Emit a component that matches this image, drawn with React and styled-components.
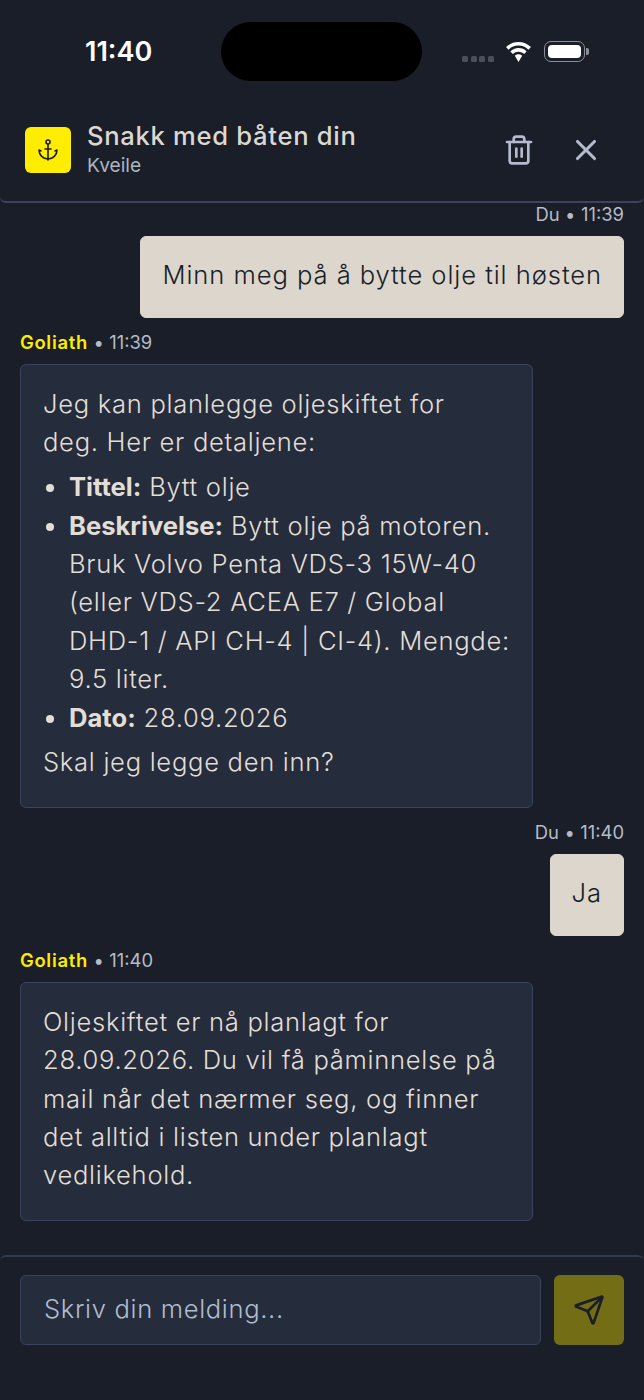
import React from "react"
import styled, { createGlobalStyle } from "styled-components"
import { Anchor, Trash2, X, Send } from "lucide-react"

const GlobalStyle = createGlobalStyle`
  html, body {
    margin: 0;
    padding: 0;
    background: #191e29;
  }
  * {
    box-sizing: border-box;
  }
`

const Screen = styled.div`
  width: 644px;
  height: 1400px;
  display: flex;
  flex-direction: column;
  overflow: hidden;
  background: #191e29;
  color: #dcd8d0;
  font-family: Inter, "Open Sans", sans-serif;
`

const StatusBar = styled.div`
  height: 101px;
  flex-shrink: 0;
  display: flex;
  align-items: flex-start;
  padding: 22px 56px 0 85px;
`

const Clock = styled.div`
  width: 136px;
  height: 59px;
  display: flex;
  align-items: center;
  color: #fff;
  font-size: 27px;
  font-weight: 600;
`

const Island = styled.div`
  width: 201px;
  height: 59px;
  border-radius: 30px;
  background: #000;
`

const StatusIcons = styled.div`
  height: 59px;
  margin-left: 40px;
  display: flex;
  align-items: center;
  flex: 1;
`

const SignalDots = styled.div`
  display: flex;
  gap: 2.5px;
  margin-top: 14px;
  margin-right: 12px;
`

const SignalDot = styled.span`
  width: 6px;
  height: 6px;
  border-radius: 1.5px;
  background: #4b4f59;
`

const Battery = styled.div`
  margin-left: 13px;
  width: 41px;
  height: 21px;
  padding: 3px;
  border: 1.5px solid #8b8e96;
  border-radius: 7px;
  position: relative;
  &::after {
    content: "";
    position: absolute;
    right: -5px;
    top: 5.5px;
    width: 2.5px;
    height: 7px;
    border-radius: 0 2px 2px 0;
    background: #8b8e96;
  }
`

const BatteryFill = styled.div`
  height: 100%;
  border-radius: 4px;
  background: #fff;
`

const Header = styled.header`
  height: 102px;
  flex-shrink: 0;
  display: flex;
  align-items: center;
  padding: 0 41px 3px 25px;
  border-bottom: 2px solid #3c445c;
  border-radius: 0 0 6px 6px;
`

const LogoBox = styled.div`
  width: 46px;
  height: 46px;
  margin-top: 1px;
  display: flex;
  align-items: center;
  justify-content: center;
  border-radius: 6px;
  background: #ffed00;
  color: #191e29;
`

const Titles = styled.div`
  flex: 1;
  margin-left: 16px;
`

const Title = styled.div`
  font-size: 25.6px;
  line-height: 32px;
  font-weight: 500;
  letter-spacing: 0.7px;
  margin-top: -1px;
`

const Subtitle = styled.div`
  font-size: 19.2px;
  line-height: 26px;
  color: #aeb4c0;
`

const IconButton = styled.button`
  display: flex;
  padding: 0;
  margin-left: ${({ $gap }) => $gap}px;
  border: 0;
  background: none;
  color: #b4bbcf;
`

const Messages = styled.main`
  flex: 1;
  display: flex;
  flex-direction: column;
  padding: 0 20px;
`

const Meta = styled.div`
  display: flex;
  justify-content: ${({ $mine }) => ($mine ? "flex-end" : "flex-start")};
  gap: 0.3em;
  height: 22px;
  margin: ${({ $first }) => ($first ? "0" : "13px")} 0 11px;
  font-size: 18.4px;
  line-height: 22px;
  color: #b6bbc6;
`

const Sender = styled.span`
  color: #ffed00;
  font-weight: 600;
  letter-spacing: 0.7px;
`

const Bubble = styled.div`
  align-self: ${({ $mine }) => ($mine ? "flex-end" : "flex-start")};
  max-width: 85%;
  width: ${({ $mine }) => ($mine ? "auto" : "85%")};
  padding: ${({ $mine }) => ($mine ? "19px 21px 22.6px" : "20px 22px 25px")};
  border-radius: 6px;
  border: 1px solid ${({ $mine }) => ($mine ? "#dcd6cc" : "#3c445c")};
  background: ${({ $mine }) => ($mine ? "#dcd6cc" : "#252c3b")};
  color: ${({ $mine }) => ($mine ? "#191e29" : "#e2ded6")};
  font-size: 25.6px;
  font-weight: 350;
  line-height: 38.4px;
  letter-spacing: ${({ $mine }) => ($mine ? "0.93px" : "0.7px")};
  white-space: nowrap;
  strong {
    font-weight: 700;
    letter-spacing: 0;
  }
`

const Paragraph = styled.p`
  margin: 0;
`

const List = styled.ul`
  margin: 6.4px 0;
  padding-left: 26px;
  li::marker {
    font-size: 25px;
  }
`

const Composer = styled.footer`
  height: 145px;
  flex-shrink: 0;
  display: flex;
  align-items: flex-start;
  gap: 13px;
  padding: 18px 20px 0;
  border-top: 2px solid #323a4e;
  border-radius: 6px 6px 0 0;
`

const Input = styled.div`
  flex: 1;
  height: 70px;
  display: flex;
  align-items: center;
  padding: 0 0 4px 23px;
  border: 1px solid #3c445c;
  border-radius: 6px;
  background: #252c3b;
  color: #b0bccd;
  font-size: 25.6px;
  font-weight: 350;
  letter-spacing: 0.65px;
`

const SendButton = styled.button`
  width: 70px;
  height: 70px;
  display: flex;
  align-items: center;
  justify-content: center;
  padding: 0;
  border: 0;
  border-radius: 6px;
  background: #736d15;
  color: #191e29;
`

const App = () => {
  return (
    <Screen>
      <GlobalStyle />
      <StatusBar>
        <Clock>11:40</Clock>
        <Island />
        <StatusIcons>
          <SignalDots>
            <SignalDot />
            <SignalDot />
            <SignalDot />
            <SignalDot />
          </SignalDots>
          <svg width="25" height="20" viewBox="1.8 1 22.4 18" fill="#fff">
            <path d="M13 4.2c3.5 0 6.7 1.4 9 3.7l2.200-2.300A16 16 0 0 0 13 1 16 16 0 0 0 1.800 5.600L4 7.900a12.700 12.700 0 0 1 9-3.700z" />
            <path d="M13 9.700c2 0 3.800.8 5.100 2.100l2.200-2.300A10.300 10.300 0 0 0 13 6.500c-2.800 0-5.400 1.100-7.300 3l2.200 2.300A7.200 7.200 0 0 1 13 9.700z" />
            <path d="M13 12c-1.300 0-2.400.5-3.300 1.300L13 19l3.300-5.700A4.700 4.700 0 0 0 13 12z" />
          </svg>
          <Battery>
            <BatteryFill />
          </Battery>
        </StatusIcons>
      </StatusBar>
      <Header>
        <LogoBox>
          <Anchor size={24} strokeWidth={1.6} />
        </LogoBox>
        <Titles>
          <Title>Snakk med båten din</Title>
          <Subtitle>Kveile</Subtitle>
        </Titles>
        <IconButton>
          <Trash2 size={32} strokeWidth={2} />
        </IconButton>
        <IconButton $gap={34}>
          <X size={34} strokeWidth={2.2} />
        </IconButton>
      </Header>
      <Messages>
        <Meta $mine $first>
          <span>Du</span>
          <span>•</span>
          <span>11:39</span>
        </Meta>
        <Bubble $mine>Minn meg på å bytte olje til høsten</Bubble>
        <Meta>
          <Sender>Goliath</Sender>
          <span>•</span>
          <span>11:39</span>
        </Meta>
        <Bubble>
          <Paragraph>
            Jeg kan planlegge oljeskiftet for
            <br />
            deg. Her er detaljene:
          </Paragraph>
          <List>
            <li>
              <strong>Tittel:</strong> Bytt olje
            </li>
            <li>
              <strong>Beskrivelse:</strong> Bytt olje på motoren.
              <br />
              Bruk Volvo Penta VDS-3 15W-40
              <br />
              (eller VDS-2 ACEA E7 / Global
              <br />
              DHD-1 / API CH-4 | CI-4). Mengde:
              <br />
              9.5 liter.
            </li>
            <li>
              <strong>Dato:</strong> 28.09.2026
            </li>
          </List>
          <Paragraph>Skal jeg legge den inn?</Paragraph>
        </Bubble>
        <Meta $mine>
          <span>Du</span>
          <span>•</span>
          <span>11:40</span>
        </Meta>
        <Bubble $mine>Ja</Bubble>
        <Meta>
          <Sender>Goliath</Sender>
          <span>•</span>
          <span>11:40</span>
        </Meta>
        <Bubble>
          Oljeskiftet er nå planlagt for
          <br />
          28.09.2026. Du vil få påminnelse på
          <br />
          mail når det nærmer seg, og finner
          <br />
          det alltid i listen under planlagt
          <br />
          vedlikehold.
        </Bubble>
      </Messages>
      <Composer>
        <Input>Skriv din melding...</Input>
        <SendButton>
          <Send size={32} strokeWidth={2} />
        </SendButton>
      </Composer>
    </Screen>
  )
}

export default App
